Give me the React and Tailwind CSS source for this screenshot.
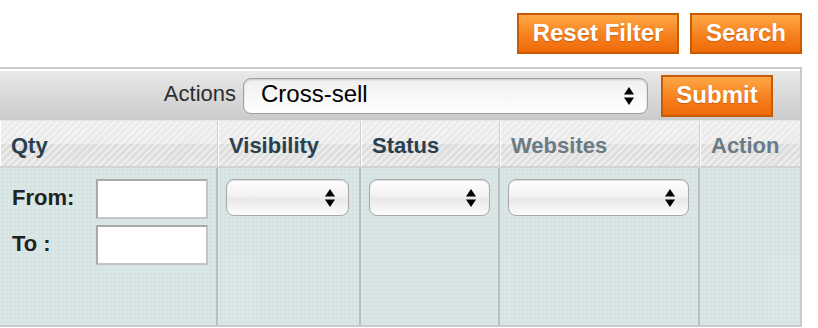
import React from "react";

function Btn({ w, children }) {
  return (
    <button
      className={`${w} h-[41px] border-2 border-[#c85a00] bg-[linear-gradient(#ffa846,#f6801e_55%,#f06a08)] text-white font-bold text-[24px] leading-none [text-shadow:0_1px_1px_rgba(150,60,0,0.45)] flex items-center justify-center pb-[2px]`}
    >
      {children}
    </button>
  );
}

function Arrows() {
  return (
    <svg width="12" height="20" viewBox="0 0 12 20" className="shrink-0">
      <path d="M6 1 L11 8.5 L1 8.5 Z" fill="#000" />
      <path d="M6 19 L11 11.5 L1 11.5 Z" fill="#000" />
    </svg>
  );
}

function FSelect({ w }) {
  return (
    <div
      className={`${w} h-[37px] rounded-[8px] border border-[#a9a9a9] bg-[linear-gradient(#ffffff,#f2f2f2_45%,#e9e9e9_55%,#fbfbfb)] shadow-[inset_0_1px_1px_rgba(0,0,0,0.15)] flex items-center justify-end pr-[12px]`}
    >
      <Arrows />
    </div>
  );
}

const headBg =
  "bg-[image:repeating-linear-gradient(135deg,rgba(255,255,255,0.45)_0px,rgba(255,255,255,0.45)_2px,transparent_2px,transparent_5px),linear-gradient(#ededed_0%,#e9e9e9_52%,#dcdcdc_52%,#e1e1e1_100%)]";

const filterBg =
  "bg-[#d4e2e2] bg-[image:repeating-linear-gradient(0deg,rgba(255,255,255,0.1)_0px,rgba(255,255,255,0.1)_2px,transparent_2px,transparent_4px),repeating-linear-gradient(90deg,rgba(255,255,255,0.1)_0px,rgba(255,255,255,0.1)_2px,transparent_2px,transparent_4px)]";

function Head({ children, muted, last }) {
  return (
    <div
      className={`${headBg} h-[45px] flex items-center pl-[10px] pt-[4px] text-[22px] font-bold ${
        muted ? "text-[#6b7b85]" : "text-[#2b404e]"
      } ${last ? "" : "border-r border-[#cdcdcd]"} border-l border-l-white`}
    >
      {children}
    </div>
  );
}

function FCell({ children, last }) {
  return (
    <div
      className={`${filterBg} h-[157px] pt-[11px] pl-[8px] ${
        last ? "" : "border-r-2 border-[#bdbdbd]"
      }`}
    >
      {children}
    </div>
  );
}

export default function App() {
  return (
    <div className="w-[818px] h-[328px] bg-white overflow-hidden font-['Liberation_Sans',Arial,sans-serif]">
      <div className="h-[67px] flex justify-end gap-[11px] pt-[13px] pr-[16px]">
        <Btn w="w-[162px]">Reset Filter</Btn>
        <Btn w="w-[112px]">Search</Btn>
      </div>
      <div className="w-[802px] border-t-2 border-r-2 border-b-2 border-[#cbcbcb] pt-[2px]">
        <div className="h-[49px] bg-[linear-gradient(#e9e9e9,#d9d9d9_50%,#cbcbcb)] flex items-center justify-end pr-[27px]">
          <span className="text-[22px] text-[#2e2e2e] mr-[7px] pb-[4px]">Actions</span>
          <div className="w-[405px] h-[36px] rounded-[8px] border border-[#9f9f9f] bg-[linear-gradient(#f0f0f0,#f7f7f7_50%,#ffffff)] shadow-[inset_0_1px_2px_rgba(0,0,0,0.18)] flex items-center justify-between pl-[17px] pr-[12px] mr-[13px]">
            <span className="text-[24px] text-black leading-none pb-[3px]">Cross-sell</span>
            <Arrows />
          </div>
          <Btn w="w-[112px] !h-[42px]">Submit</Btn>
        </div>
        <div className="h-[1px] bg-[#e3e9e9]" />
        <div className="grid grid-cols-[218px_143px_139px_200px_100px] border-b-2 border-[#d2d2d2]">
          <Head>Qty</Head>
          <Head>Visibility</Head>
          <Head>Status</Head>
          <Head muted>Websites</Head>
          <Head muted last>Action</Head>
        </div>
        <div className="grid grid-cols-[218px_143px_139px_200px_100px]">
          <FCell>
            <div className="flex flex-col gap-[6px] pl-[4px]">
              <div className="flex items-center">
                <span className="w-[84px] text-[22px] font-bold text-[#222] pb-[4px]">From:</span>
                <div className="w-[112px] h-[40px] bg-white border-2 border-[#c4c4c4] border-t-[#a9a9a9] border-l-[#a9a9a9]" />
              </div>
              <div className="flex items-center">
                <span className="w-[84px] text-[22px] font-bold text-[#222] pb-[4px]">To :</span>
                <div className="w-[112px] h-[40px] bg-white border-2 border-[#c4c4c4] border-t-[#a9a9a9] border-l-[#a9a9a9]" />
              </div>
            </div>
          </FCell>
          <FCell>
            <FSelect w="w-[123px]" />
          </FCell>
          <FCell>
            <FSelect w="w-[121px]" />
          </FCell>
          <FCell>
            <FSelect w="w-[181px]" />
          </FCell>
          <FCell last />
        </div>
      </div>
    </div>
  );
}
